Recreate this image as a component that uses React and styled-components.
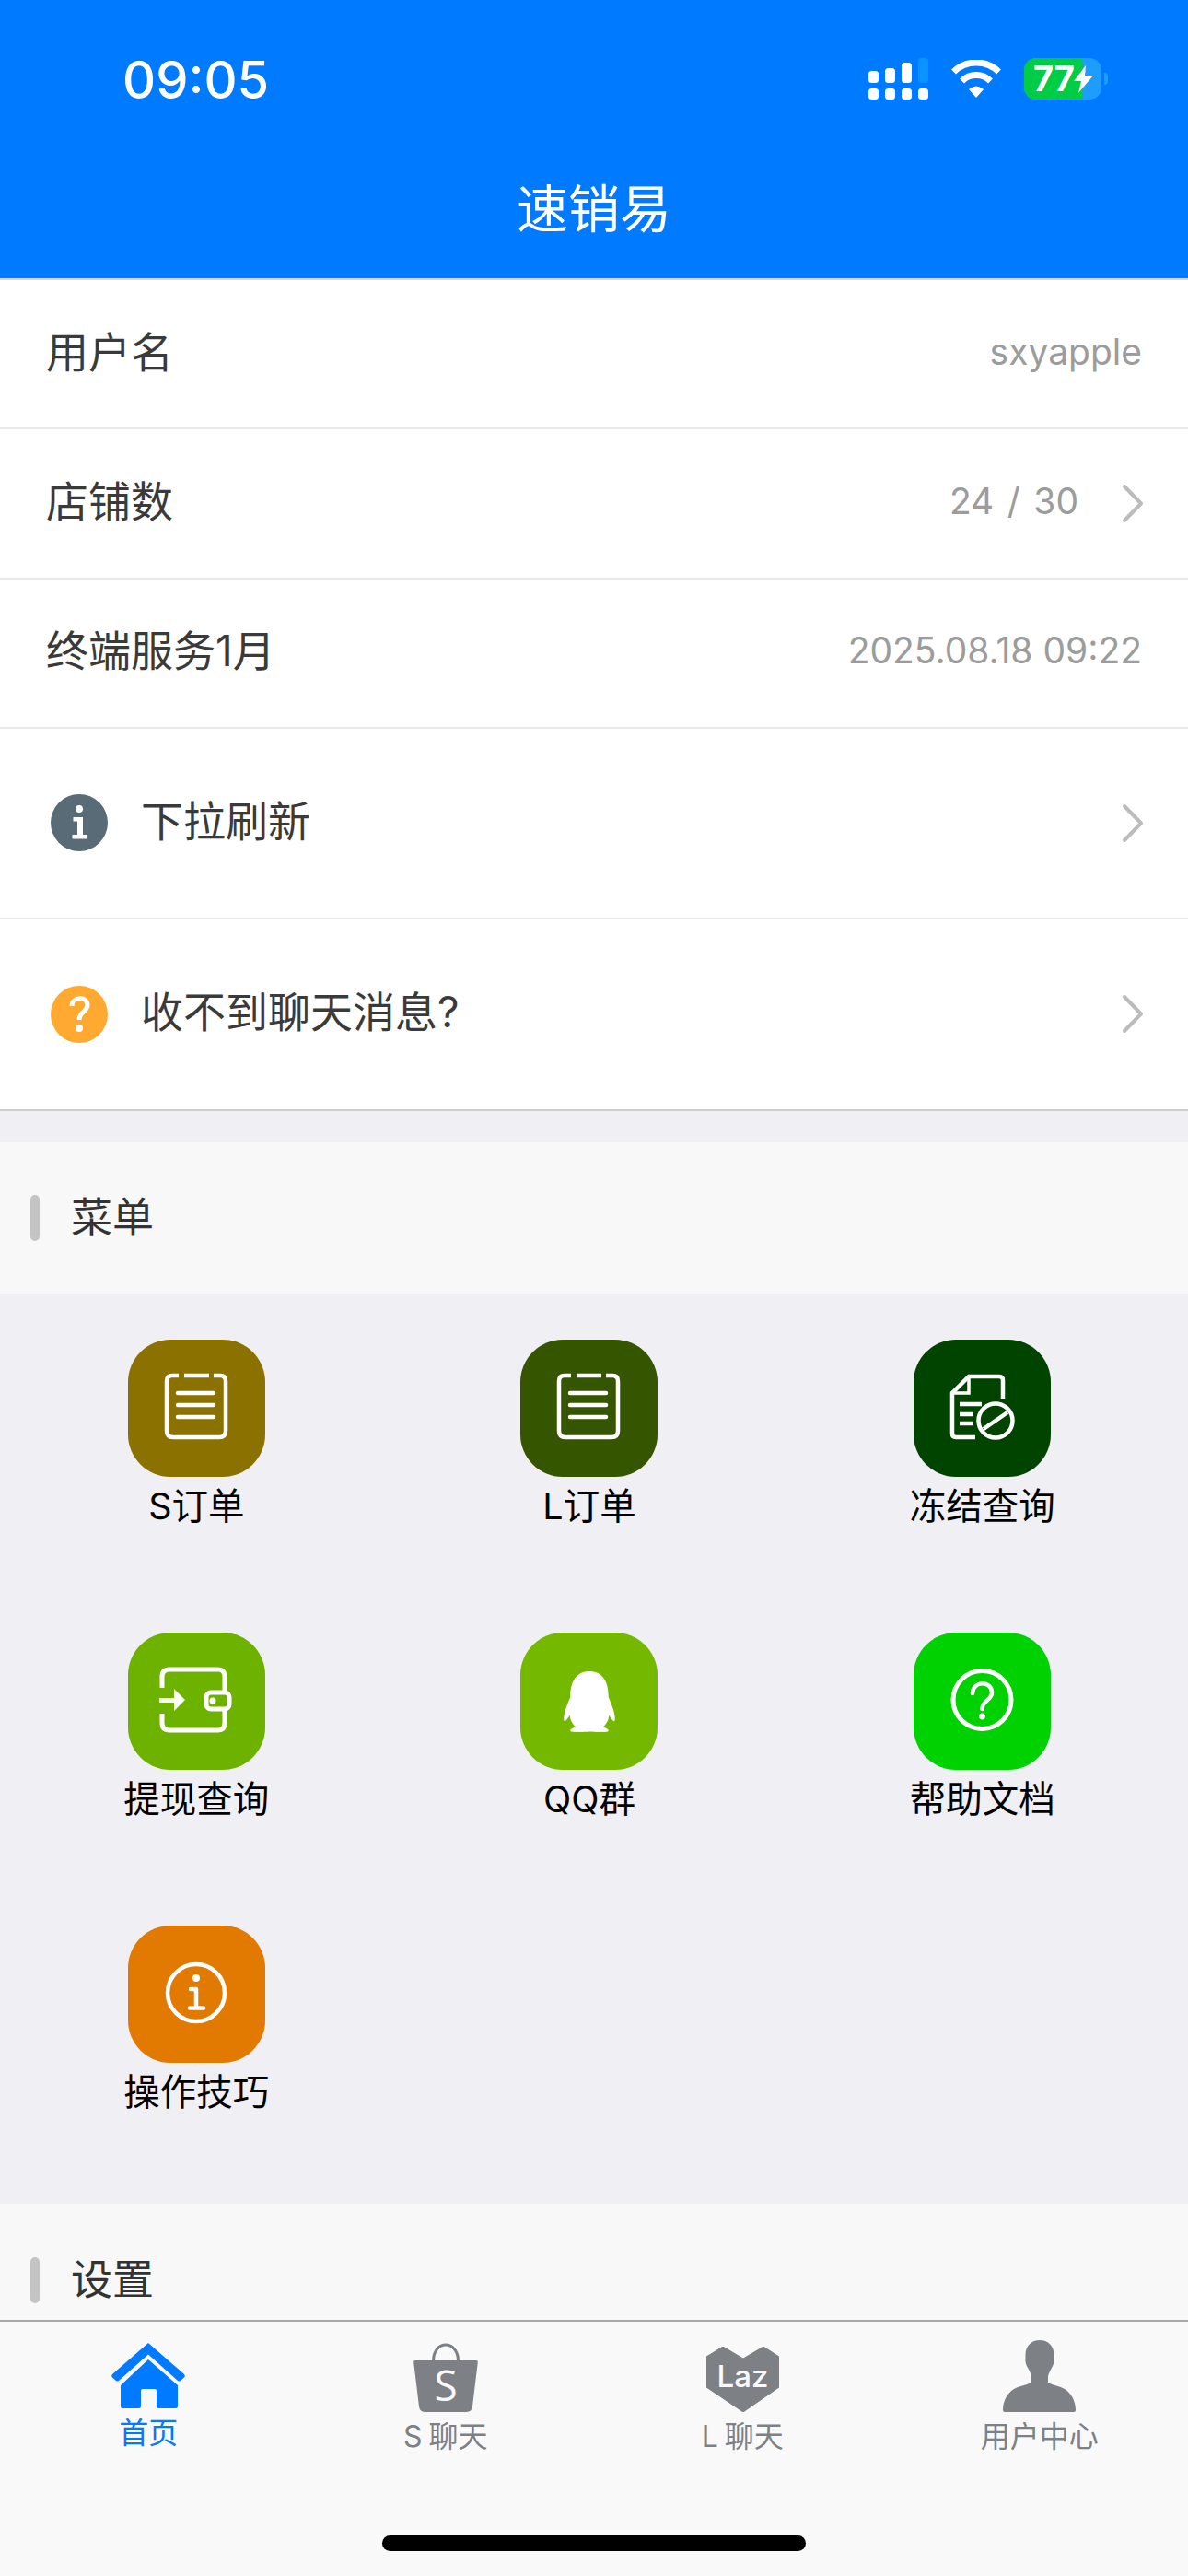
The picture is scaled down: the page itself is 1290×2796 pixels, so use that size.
import React from "react";
import styled, { createGlobalStyle } from "styled-components";
import { FaQq } from "react-icons/fa";

const GlobalStyle = createGlobalStyle`
  html, body {
    margin: 0;
    padding: 0;
    background: #efeff4;
  }
  * {
    box-sizing: border-box;
  }
`;

const Page = styled.div`
  width: 1290px;
  height: 2796px;
  display: flex;
  flex-direction: column;
  overflow: hidden;
  background: #efeff4;
  font-family: Inter, "Noto Sans CJK SC", sans-serif;
`;

const Header = styled.header`
  flex: none;
  height: 304px;
  background: #007aff;
  border-bottom: 2px solid #d6d6d8;
  color: #fff;
`;

const StatusBar = styled.div`
  height: 197px;
  padding: 63px 87px 0 133px;
  display: flex;
  align-items: flex-start;
  justify-content: space-between;
`;

const Time = styled.div`
  font-size: 56px;
  font-weight: 500;
  line-height: 46px;
  margin-top: 1px;
`;

const StatusIcons = styled.div`
  display: flex;
  align-items: flex-start;
`;

const SignalIcon = styled.svg`
  width: 65px;
  height: 45px;
  margin-right: 25px;
`;

const WifiIcon = styled.svg`
  width: 54px;
  height: 41px;
  margin: 2px 25px 0 0;
`;

const Battery = styled.div`
  position: relative;
  width: 84px;
  height: 45px;
  border-radius: 13px;
  overflow: hidden;
  background: #1f9dff;
`;

const BatteryFill = styled.div`
  height: 100%;
  background: #00cc45;
`;

const BatteryText = styled.span`
  position: absolute;
  left: 10px;
  top: 0;
  font-size: 38px;
  font-weight: 700;
  line-height: 45px;
`;

const BatteryBolt = styled.svg`
  position: absolute;
  left: 54px;
  top: 8px;
  width: 21px;
  height: 30px;
`;

const BatteryCap = styled.div`
  width: 4px;
  height: 13px;
  margin: 16px 0 0 3px;
  border-radius: 0 6px 6px 0;
  background: #1f9dff;
`;

const Title = styled.h1`
  margin: 0;
  font-size: 56px;
  font-weight: 400;
  line-height: 60px;
  text-align: center;
`;

const Content = styled.main`
  flex: 1;
  min-height: 0;
  overflow: hidden;
`;

const InfoList = styled.section`
  background: #fff;
  border-bottom: 2px solid #cdcdd0;
`;

const Row = styled.div`
  height: ${({ $tall }) => ($tall ? "206.5px" : "162.4px")};
  padding: 0 50px;
  display: flex;
  align-items: center;
  color: #3a3a3a;
  font-size: 46px;
  border-bottom: 2px solid #e9e9e9;

  &:last-child {
    border-bottom: none;
  }
`;

const RowIcon = styled.span`
  flex: none;
  width: 62px;
  height: 62px;
  margin: 0 36px 0 5px;
  border-radius: 50%;
  display: flex;
  align-items: center;
  justify-content: center;
  background: ${({ $color }) => $color};
`;

const RowLabel = styled.span`
  flex: 1;
  padding-bottom: 11px;
`;

const RowValue = styled.span`
  padding-bottom: 6px;
  color: #9c9c9c;
  font-size: 39px;
  word-spacing: ${({ $spaced }) => ($spaced ? "3.5px" : "0")};
`;

const ChevronIcon = styled.svg`
  flex: none;
  width: 24px;
  height: 41px;
  margin-left: ${({ $gap }) => $gap || 0}px;
  margin-right: -2px;
`;

const SectionHead = styled.div`
  height: 165px;
  margin-top: ${({ $gap }) => $gap || 0}px;
  padding-left: 33px;
  display: flex;
  align-items: center;
  background: #f8f8f8;
`;

const SectionBar = styled.span`
  width: 10px;
  height: 50px;
  margin-right: 34px;
  border-radius: 5px;
  background: #c4c4c4;
`;

const SectionTitle = styled.span`
  padding-bottom: 6px;
  color: #333;
  font-size: 45px;
`;

const MenuGrid = styled.div`
  width: 1280px;
  padding-top: 50px;
  display: grid;
  grid-template-columns: repeat(3, 1fr);
  grid-auto-rows: 302px;
  row-gap: 16px;
`;

const MenuItem = styled.div`
  display: flex;
  flex-direction: column;
  align-items: center;
`;

const MenuBadge = styled.div`
  width: 149px;
  height: 149px;
  border-radius: 46px;
  display: flex;
  align-items: center;
  justify-content: center;
  background: ${({ $color }) => $color};
  color: #fff;
`;

const MenuSvg = styled.svg`
  width: 149px;
  height: 149px;
`;

const MenuLabel = styled.span`
  margin-top: 7px;
  color: #000;
  font-size: 39.5px;
  line-height: 50px;
`;

const TabBar = styled.nav`
  flex: none;
  height: 278px;
  background: #f9f9f9;
  border-top: 2px solid #a8a8aa;
  display: flex;
  flex-direction: column;
  align-items: center;
`;

const Tabs = styled.div`
  width: 100%;
  padding-top: 20px;
  display: grid;
  grid-template-columns: repeat(4, 322.5px);
`;

const Tab = styled.div`
  display: flex;
  flex-direction: column;
  align-items: center;
  color: ${({ $active }) => ($active ? "#007aff" : "#7d8085")};
`;

const TabIconSlot = styled.div`
  height: 78px;
  display: flex;
  align-items: flex-end;
`;

const TabLabel = styled.span`
  margin-top: ${({ $active }) => ($active ? "4px" : "8px")};
  font-size: 32px;
  line-height: 38px;
  word-spacing: -2px;
`;

const HomeIndicator = styled.div`
  width: 460px;
  height: 17px;
  margin-top: auto;
  margin-bottom: 27px;
  border-radius: 9px;
  background: #000;
`;

const Chevron = ({ gap }) => (
  <ChevronIcon $gap={gap} viewBox="0 0 24 41">
    <path d="M3 2 L21 20.5 L3 39" fill="none" stroke="#bcbcbc" strokeWidth="4" strokeLinecap="round" strokeLinejoin="round" />
  </ChevronIcon>
);

const DocIcon = () => (
  <MenuSvg viewBox="0 0 149 149">
    <g fill="none" stroke="#fff" strokeWidth="4.5">
      <path d="M55 39 H48 Q42 39 42 45 V99 Q42 106 49 106 H99 Q106 106 106 99 V45 Q106 39 100 39 H93" />
      <path d="M61 39 H88" />
      <path d="M54 58 H93 M54 71 H93 M54 84 H93" strokeLinecap="round" />
    </g>
  </MenuSvg>
);

const FreezeIcon = () => (
  <MenuSvg viewBox="0 0 149 149">
    <g fill="none" stroke="#fff" strokeWidth="4.5">
      <path d="M67 106 H46 Q42 106 42 102 V58 L60 40 H93 Q97 40 97 44 V65" />
      <path d="M60 40 V58 H42" strokeWidth="3.5" />
      <path d="M50 70 H74 M50 81 H65 M50 91 H65" />
      <circle cx="89" cy="88" r="18.5" />
      <path d="M76 97 L102 79" />
    </g>
  </MenuSvg>
);

const WalletIcon = () => (
  <MenuSvg viewBox="0 0 149 149">
    <g fill="none" stroke="#fff" strokeWidth="5">
      <path d="M37 60 V48 Q37 40 45 40 H98 Q105 40 105 48 V64 M105 85 V98 Q105 106 98 106 H45 Q37 106 37 98 V88" />
      <rect x="85" y="65" width="25" height="18" rx="5" />
    </g>
    <circle cx="92" cy="74" r="3.5" fill="#fff" />
    <path d="M34 71 H50 V61 L62 73 L50 85 V76 H34 Z" fill="#fff" />
  </MenuSvg>
);

const HelpIcon = () => (
  <MenuSvg viewBox="0 0 149 149">
    <g fill="none" stroke="#fff" strokeWidth="5">
      <circle cx="74.5" cy="73" r="31.5" />
      <path d="M64 66 C64 52 85 52 85 65 C85 74 74.5 73 74.5 83" strokeLinecap="round" strokeWidth="4.5" />
    </g>
    <circle cx="74.5" cy="91" r="3.4" fill="#fff" />
  </MenuSvg>
);

const TipIcon = () => (
  <MenuSvg viewBox="0 0 149 149">
    <circle cx="74" cy="73" r="31" fill="none" stroke="#fff" strokeWidth="4.5" />
    <circle cx="74" cy="57" r="4" fill="#fff" />
    <path d="M68 69 H74 V89 M67 89.500 H82" fill="none" stroke="#fff" strokeWidth="4.5" strokeLinecap="round" strokeLinejoin="round" />
  </MenuSvg>
);

const menuItems = [
  { label: "S订单", color: "#8a7100", icon: <DocIcon /> },
  { label: "L订单", color: "#365500", icon: <DocIcon /> },
  { label: "冻结查询", color: "#004400", icon: <FreezeIcon /> },
  { label: "提现查询", color: "#6eb200", icon: <WalletIcon /> },
  { label: "QQ群", color: "#74b800", icon: <FaQq size={66} /> },
  { label: "帮助文档", color: "#00d100", icon: <HelpIcon /> },
  { label: "操作技巧", color: "#e27900", icon: <TipIcon /> }
];

const HomeTabIcon = () => (
  <svg width="80" height="71" viewBox="0 0 80 71" style={{ marginBottom: 4 }}>
    <path d="M40 0 L79 34 Q80.5 36 79 37.5 L75 41 Q73.5 42 72 41 L40 12.5 L8 41 Q6.5 42 5 41 L1 37.5 Q-.5 36 1 34 Z" fill="currentColor" />
    <path d="M40 18 L72 46 V69 Q72 71 70 71 H51 Q49 71 49 69 V52 Q49 50 47 50 H34 Q32 50 32 52 V69 Q32 71 30 71 H12 Q10 71 10 69 V46 Z" fill="currentColor" />
  </svg>
);

const BagTabIcon = () => (
  <svg width="70" height="76" viewBox="0 0 70 76" overflow="visible">
    <path d="M21.5 21 C21.5 -3 48.5 -3 48.5 21" fill="none" stroke="currentColor" strokeWidth="3" />
    <path d="M2 20 H68 Q70 20 69.800 22 L64 70 Q63.300 76 57 76 H13 Q6.700 76 6 70 L.2 22 Q0 20 2 20 Z" fill="currentColor" />
    <text x="35" y="64" textAnchor="middle" fontSize="46" fontFamily="Open Sans, sans-serif" fill="#f9f9f9">S</text>
  </svg>
);

const LazTabIcon = () => (
  <svg width="79" height="71" viewBox="0 0 79 71">
    <path d="M18 0 L40 13 L62 0 L79 11 V44 L40 71 L0 44 V11 Z" fill="currentColor" strokeLinejoin="round" stroke="currentColor" strokeWidth="1" />
    <text x="39.500" y="44" textAnchor="middle" fontSize="33" fontWeight="500" fontFamily="Inter, sans-serif" fill="#f9f9f9">Laz</text>
  </svg>
);

const UserTabIcon = () => (
  <svg width="79" height="78" viewBox="0 0 79 78">
    <path
      d="M40 0 C50 0 55.500 7 55.500 16 L55.500 20 C56 23 55 27 53 30 C51 34 49 37 49 40 L49 46 C54 49 62 50 67 53 C74 57 79 66 79 76 Q79 78 77 78 L2 78 Q0 78 0 76 C0 66 5 57 12 53 C17 50 25 49 31 46 L31 40 C31 37 29 34 27 30 C25 27 24 23 24.500 20 L24.500 16 C24.500 7 30 0 40 0 Z"
      fill="currentColor"
    />
  </svg>
);

const tabs = [
  { label: "首页", active: true, icon: <HomeTabIcon /> },
  { label: "S 聊天", icon: <BagTabIcon /> },
  { label: "L 聊天", icon: <LazTabIcon /> },
  { label: "用户中心", icon: <UserTabIcon /> }
];

const App = () => (
  <Page>
    <GlobalStyle />
    <Header>
      <StatusBar>
        <Time>09:05</Time>
        <StatusIcons>
          <SignalIcon viewBox="0 0 65 45">
            <g fill="#fff">
              <rect x="0" y="14" width="11" height="13" rx="3.500" />
              <rect x="18" y="11" width="11" height="16" rx="3.500" />
              <rect x="36" y="5" width="11" height="22" rx="3.500" />
              <rect x="0" y="33" width="11" height="12" rx="3.500" />
              <rect x="18" y="33" width="11" height="12" rx="3.500" />
              <rect x="36" y="33" width="11" height="12" rx="3.500" />
              <rect x="54" y="33" width="11" height="12" rx="3.500" />
            </g>
            <rect x="54" y="0" width="11" height="27" rx="3.500" fill="#0a94ff" />
          </SignalIcon>
          <WifiIcon viewBox="0 0 54 41">
            <g fill="none" stroke="#fff" strokeWidth="7">
              <path d="M2.500 13 A35 35 0 0 1 51.500 13" />
              <path d="M11.500 23 A22 22 0 0 1 42.500 23" />
            </g>
            <path d="M19 32 Q27 25 35 32 L27 41 Z" fill="#fff" />
          </WifiIcon>
          <Battery>
            <BatteryFill style={{ width: "76%" }} />
            <BatteryText>77</BatteryText>
            <BatteryBolt viewBox="0 0 21 30">
              <path d="M13 0 L0 17 H8 L5 30 L21 11 H12 Z" fill="#fff" />
            </BatteryBolt>
          </Battery>
          <BatteryCap />
        </StatusIcons>
      </StatusBar>
      <Title>速销易</Title>
    </Header>
    <Content>
      <InfoList>
        <Row>
          <RowLabel>用户名</RowLabel>
          <RowValue>sxyapple</RowValue>
        </Row>
        <Row>
          <RowLabel>店铺数</RowLabel>
          <RowValue $spaced>24 / 30</RowValue>
          <Chevron gap={47} />
        </Row>
        <Row>
          <RowLabel>终端服务1月</RowLabel>
          <RowValue>2025.08.18 09:22</RowValue>
        </Row>
        <Row $tall>
          <RowIcon $color="#5a6b78">
            <svg width="62" height="62" viewBox="0 0 62 62">
              <circle cx="31" cy="16" r="4" fill="#fff" />
              <path d="M24.500 25 H35 V44 H40 V48.500 H23.500 V44 H29 V29.500 H24.500 Z" fill="#fff" />
            </svg>
          </RowIcon>
          <RowLabel>下拉刷新</RowLabel>
          <Chevron />
        </Row>
        <Row $tall>
          <RowIcon $color="#ffa930">
            <svg width="24" height="40" viewBox="0 0 24 40">
              <path d="M4 11 C4 0 21 0 21 10 C21 17 12 17 12 26" fill="none" stroke="#fff" strokeWidth="5" />
              <circle cx="12" cy="35" r="4" fill="#fff" />
            </svg>
          </RowIcon>
          <RowLabel>收不到聊天消息?</RowLabel>
          <Chevron />
        </Row>
      </InfoList>
      <SectionHead $gap={33}>
        <SectionBar />
        <SectionTitle>菜单</SectionTitle>
      </SectionHead>
      <MenuGrid>
        {menuItems.map(item => (
          <MenuItem key={item.label}>
            <MenuBadge $color={item.color}>{item.icon}</MenuBadge>
            <MenuLabel>{item.label}</MenuLabel>
          </MenuItem>
        ))}
      </MenuGrid>
      <SectionHead>
        <SectionBar />
        <SectionTitle>设置</SectionTitle>
      </SectionHead>
    </Content>
    <TabBar>
      <Tabs>
        {tabs.map(tab => (
          <Tab key={tab.label} $active={tab.active}>
            <TabIconSlot>{tab.icon}</TabIconSlot>
            <TabLabel $active={tab.active}>{tab.label}</TabLabel>
          </Tab>
        ))}
      </Tabs>
      <HomeIndicator />
    </TabBar>
  </Page>
);

export default App;
